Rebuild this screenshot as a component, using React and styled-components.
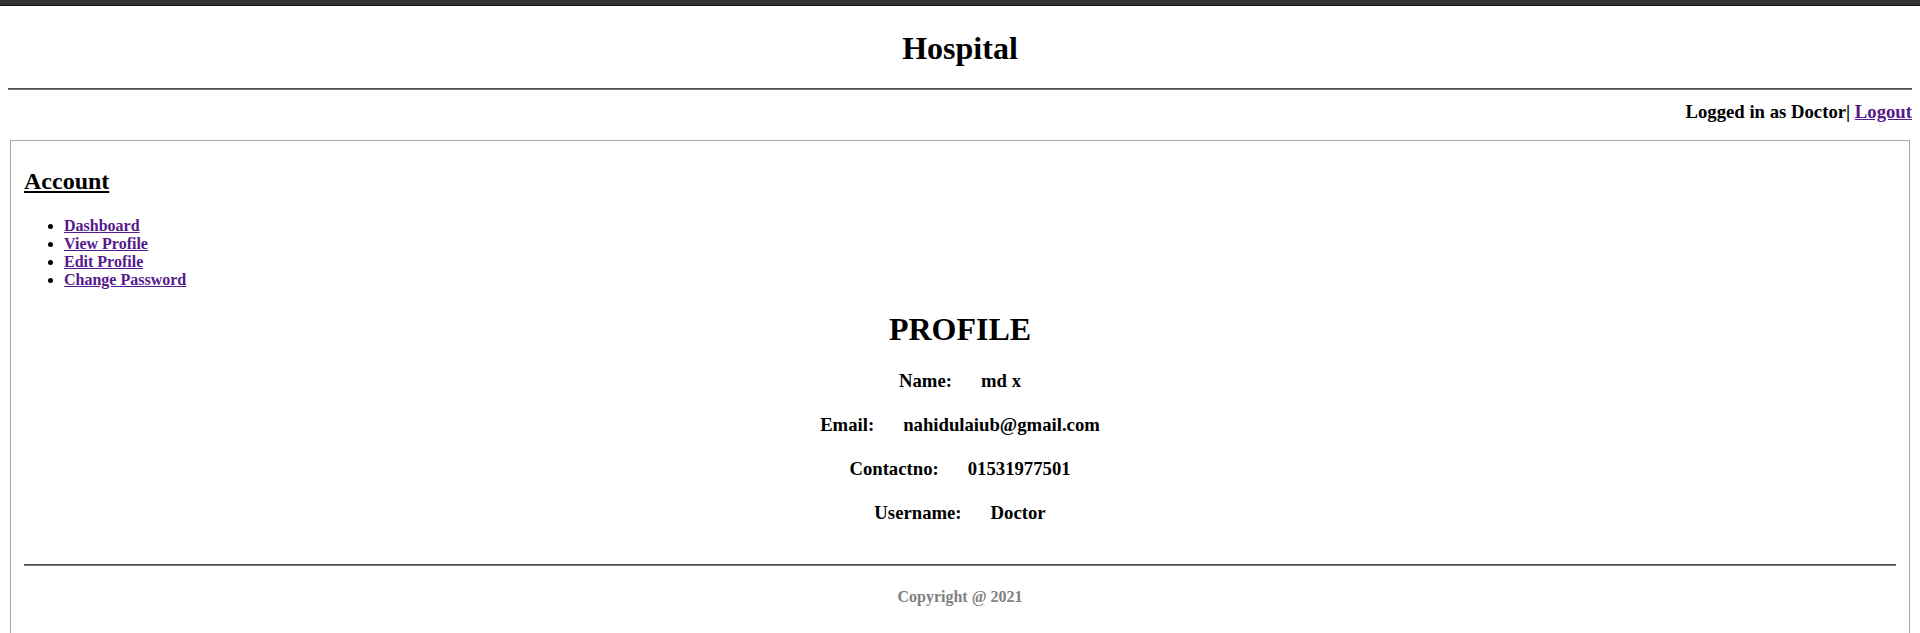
import React from 'react'
import styled, { createGlobalStyle } from 'styled-components'

const GlobalStyle = createGlobalStyle`
    body{
        margin: 0;
        background: #ffffff;
        font-family: "Liberation Serif", "Times New Roman", serif;
        color: #000000;
    }
`

const profile = [
    { label: 'Name:', value: 'md x' },
    { label: 'Email:', value: 'nahidulaiub@gmail.com' },
    { label: 'Contactno:', value: '01531977501' },
    { label: 'Username:', value: 'Doctor' },
]

const menu = ['Dashboard', 'View Profile', 'Edit Profile', 'Change Password']

export default function App() {
    return (
        <>
            <GlobalStyle />
            <TopBar />
            <Page>
                <Title>Hospital</Title>
                <Rule />
                <Status>
                    Logged in as Doctor| <Link href="#">Logout</Link>
                </Status>
                <Panel>
                    <Account>Account</Account>
                    <Menu>
                        {menu.map((item) => (
                            <li key={item}><Link href="#">{item}</Link></li>
                        ))}
                    </Menu>
                    <Heading>PROFILE</Heading>
                    <Details>
                        {profile.map((row) => (
                            <Row key={row.label}>
                                <span>{row.label}</span>
                                <span>{row.value}</span>
                            </Row>
                        ))}
                    </Details>
                    <Rule $inner />
                    <Footer>Copyright @ 2021</Footer>
                </Panel>
            </Page>
        </>
    )
}

const TopBar = styled.div`
    height: 5px;
    background: #333333;
    border-bottom: 1px solid #141414;
`

const Page = styled.div`
    padding: 0 8px;
`

const Title = styled.h1`
    margin: 24px 0 22px 0;
    font-size: 32px;
    line-height: 36px;
    font-weight: 700;
    text-align: center;
`

const Rule = styled.hr`
    margin: ${(p) => (p.$inner ? '40px 0 0 0' : '0')};
    height: 0;
    border: none;
    border-top: 1px solid #4f4f4f;
    border-bottom: 1px solid #7a7a7a;
`

const Status = styled.h3`
    margin: 11px 0 17px 0;
    font-size: 18.72px;
    line-height: 22px;
    font-weight: 700;
    text-align: right;
`

const Link = styled.a`
    color: #551a8b;
    text-decoration: underline;
    font-weight: 700;
`

const Panel = styled.div`
    margin: 0 2px;
    border: 1px solid #a8a8a8;
    padding: 0 13px 30px 13px;
`

const Account = styled.h2`
    margin: 26px 0 0 0;
    font-size: 24px;
    line-height: 28px;
    font-weight: 700;
    text-decoration: underline;
`

const Menu = styled.ul`
    margin: 22px 0 0 0;
    padding-left: 40px;
    font-size: 16px;
    line-height: 18px;
`

const Heading = styled.h1`
    margin: 22px 0 0 0;
    font-size: 32px;
    line-height: 36px;
    font-weight: 700;
    text-align: center;
`

const Details = styled.div`
    margin-top: 23px;
    display: flex;
    flex-direction: column;
    gap: 22.1px;
`

const Row = styled.div`
    display: flex;
    justify-content: center;
    gap: 29px;
    font-size: 18.72px;
    line-height: 22px;
    font-weight: 700;
`

const Footer = styled.p`
    margin: 22px 0 0 0;
    font-size: 16px;
    line-height: 18px;
    font-weight: 700;
    color: #808080;
    text-align: center;
`
